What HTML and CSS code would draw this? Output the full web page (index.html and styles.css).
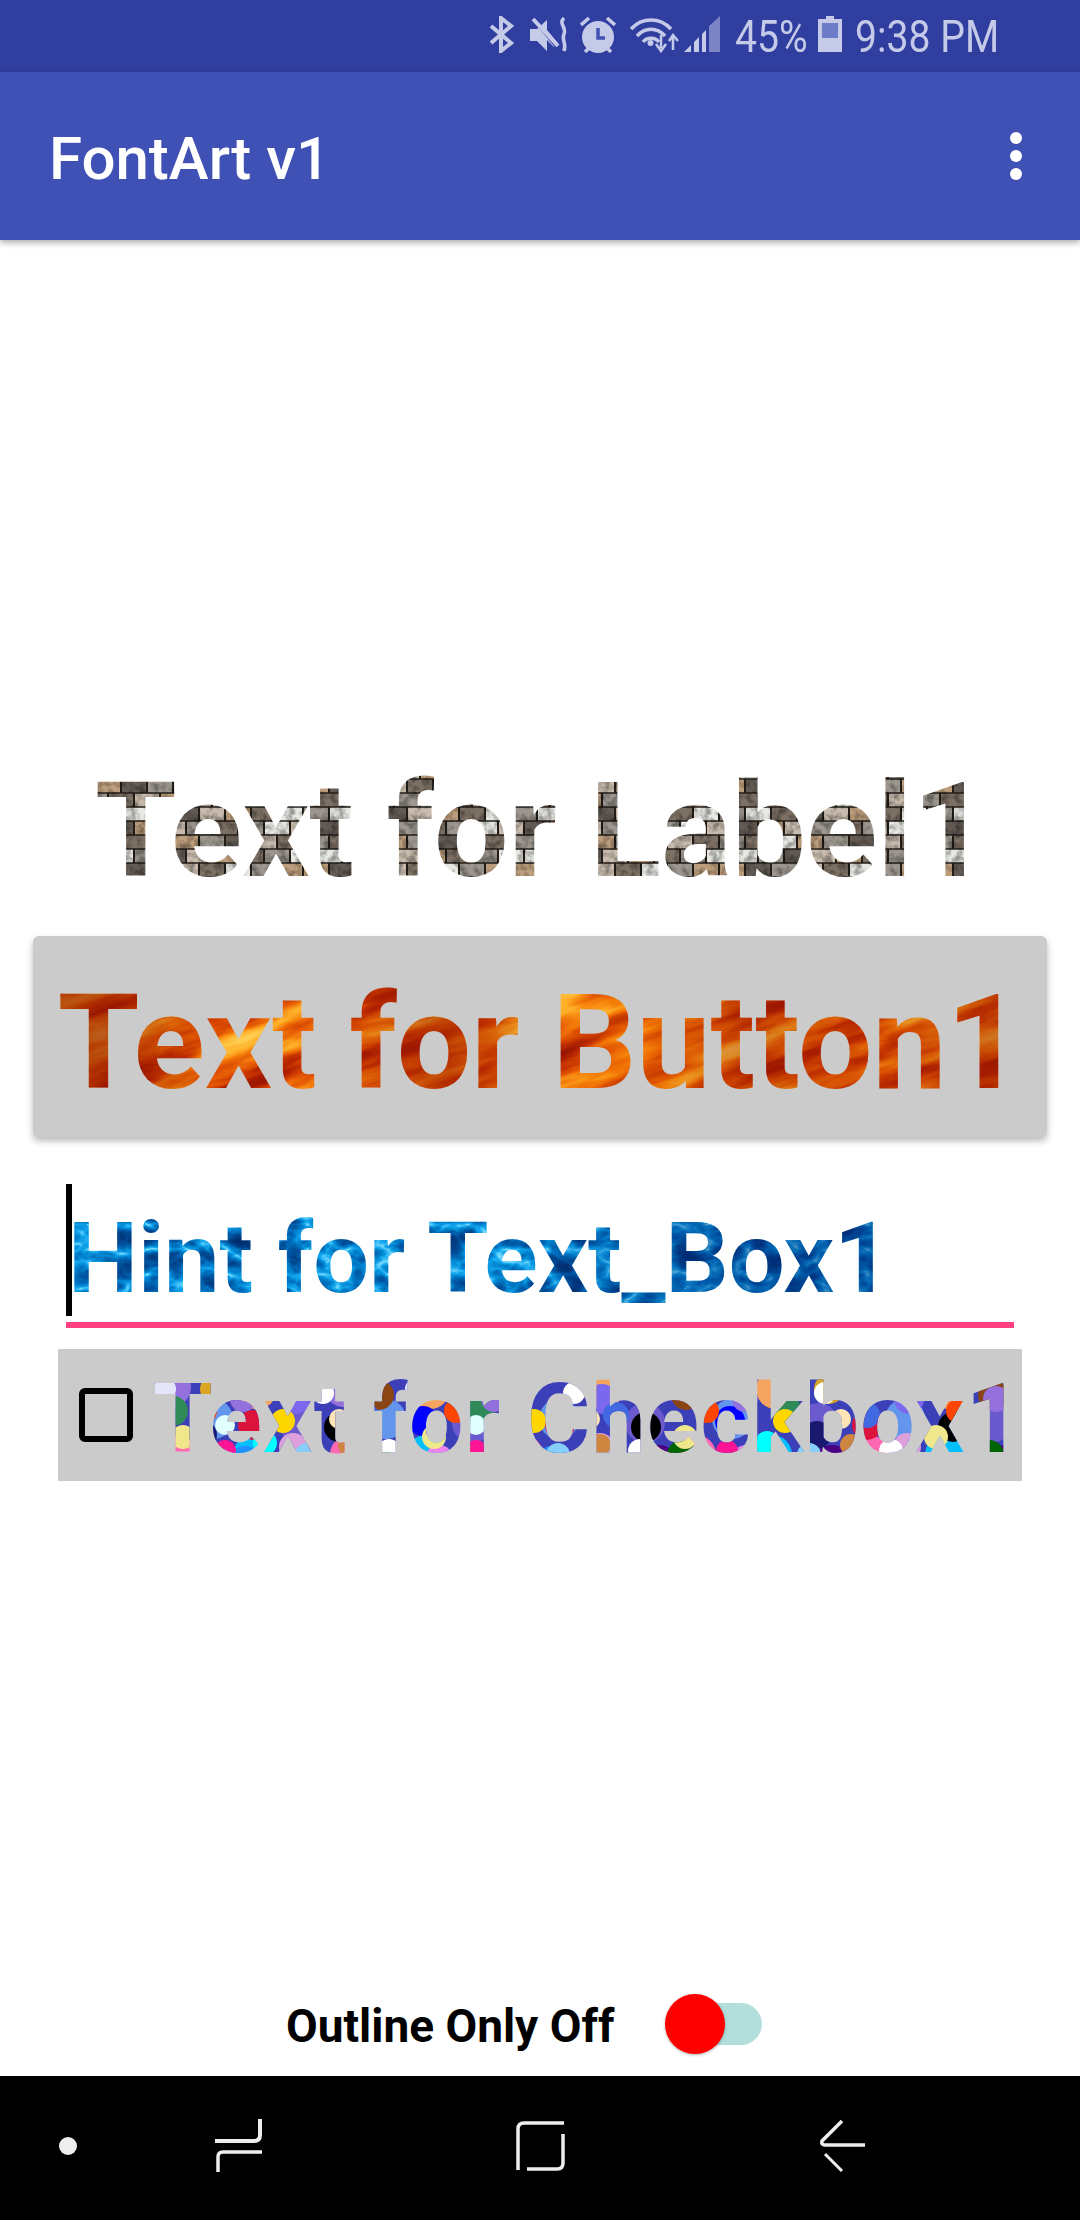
FILE: index.html
```html
<!DOCTYPE html>
<html lang="en">
<head>
    <meta charset="UTF-8">
    <meta name="viewport" content="width=device-width, initial-scale=1.0">
    <title>FontArt v1</title>
    <link rel="stylesheet" href="styles.css">
</head>
<body>
    <div class="screen">
        <!-- Status bar -->
        <div class="status-bar">
            <svg class="status-icon" width="25" height="37" viewBox="0 0 25 37"><path d="M2 10 22 27 12 35V2L22 10 2 27" fill="none" stroke="currentColor" stroke-width="4"/></svg>
            <svg class="status-icon gap-mute" width="38" height="37" viewBox="0 0 38 37"><path d="M0 13H7L17 4V14L28 27 24 31 17 24V35L7 25H0Z" fill="currentColor"/><path d="M2 2 27 32" stroke="#303f9f" stroke-width="2"/><path d="M3 3 28 30" stroke="currentColor" stroke-width="4"/><path d="M34 2C28 8 37 11 34 18 31 24 37 27 34 35" fill="none" stroke="currentColor" stroke-width="3.5"/></svg>
            <svg class="status-icon gap-alarm" width="36" height="37" viewBox="0 0 36 37"><circle cx="18" cy="21" r="16" fill="currentColor"/><path d="M1 9 9 2M35 9 27 2M5 36 9 32M31 36 27 32" stroke="currentColor" stroke-width="3.5"/><path d="M18 12V22H25" fill="none" stroke="#3f51b5" stroke-width="3.5"/></svg>
            <svg class="status-icon gap-wifi" width="50" height="37" viewBox="0 0 50 37"><path d="M1 13C12 1 30 1 41 13M7 20C15 11 27 11 35 20M13 26C17 21 25 21 29 26" fill="none" stroke="currentColor" stroke-width="3.5"/><circle cx="20.500" cy="27" r="3" fill="currentColor"/><path d="M31 19V32M26 28 31 35 36 28M43 34V21M39 25 43 19 48 25" fill="none" stroke="currentColor" stroke-width="2.500"/></svg>
            <svg class="status-icon gap-signal" width="36" height="37" viewBox="0 0 36 37"><path d="M25 10 36 0V36H25Z" fill="currentColor" opacity=".5"/><path d="M0 36 7 29V36ZM10 26 15 21V36H10ZM18 18 22 14V36H18Z" fill="currentColor"/></svg>
            <span class="status-text pct">45%</span>
            <svg class="status-icon gap-battery" width="24" height="37" viewBox="0 0 24 37"><path d="M8 0H16V3H24V36H0V3H8Z" fill="currentColor"/><rect x="4" y="7" width="16" height="15" fill="#3f51b5" opacity=".65"/></svg>
            <span class="status-text clock">9:38 PM</span>
        </div>

        <!-- App bar -->
        <header class="app-bar">
            <h1 class="app-title">FontArt v1</h1>
            <div class="overflow-menu"><span></span><span></span><span></span></div>
        </header>

        <main class="content">
            <div class="label-text art art-brick">Text for Label1</div>

            <button class="art-button"><span class="art art-fire">Text for Button1</span></button>

            <div class="text-box">
                <span class="caret"></span>
                <span class="hint art art-water">Hint for Text_Box1</span>
            </div>

            <div class="check-row">
                <span class="check-box"></span>
                <span class="check-text art art-bokeh">Text for Checkbox1</span>
            </div>

            <div class="outline-row">
                <span class="outline-label">Outline Only Off</span>
                <span class="switch"><span class="switch-thumb"></span></span>
            </div>
        </main>

        <!-- Navigation bar -->
        <nav class="nav-bar">
            <span class="nav-dot"></span>
            <svg width="48" height="54" viewBox="0 0 48 54"><path d="M45 0V16Q45 22 39 22H0" fill="none" stroke="#eee" stroke-width="4"/><path d="M47 33H8Q3 33 3 38V53" fill="none" stroke="#eee" stroke-width="3.500"/></svg>
            <svg width="50" height="50" viewBox="0 0 50 50"><path d="M48 2H8Q2 2 2 8V49" fill="none" stroke="#eee" stroke-width="3.500"/><path d="M47 13V42Q47 48 41 48H11" fill="none" stroke="#eee" stroke-width="3.500"/></svg>
            <svg width="48" height="52" viewBox="0 0 48 52"><path d="M23 1 3 21Q2 25 6 25H46" fill="none" stroke="#eee" stroke-width="3.500"/><path d="M6 34 23 51" fill="none" stroke="#eee" stroke-width="3"/></svg>
        </nav>
    </div>
</body>
</html>
```

FILE: styles.css
```css
/* Global Styles */
body {
    margin: 0;
    background: #fff;
    font-family: Roboto, Arial, sans-serif;
}

.screen {
    width: 1080px;
    height: 2220px;
    display: flex;
    flex-direction: column;
    overflow: hidden;
}

/* Status Bar */
.status-bar {
    height: 72px;
    flex: none;
    background: #303f9f;
    color: #c5cae9;
    display: flex;
    align-items: flex-start;
    padding: 16px 80px 0 489px;
    box-sizing: border-box;
}

.status-icon {
    flex: none;
}

.gap-mute { margin-left: 16px; }
.gap-alarm { margin-left: 12px; }
.gap-wifi { margin-left: 14px; }
.gap-signal { margin-left: 4px; }
.gap-battery { margin-left: 13px; }

.status-text {
    font-size: 44px;
    line-height: 42px;
    white-space: nowrap;
    transform-origin: left center;
    transform: scaleX(0.89);
}

.pct {
    width: 70px;
    margin-left: 15px;
}

.clock {
    width: 145px;
    margin-left: 13px;
}

/* App Bar */
.app-bar {
    height: 168px;
    flex: none;
    box-sizing: border-box;
    background: #3f51b5;
    box-shadow: 0 3px 6px rgba(0, 0, 0, 0.3);
    display: flex;
    align-items: center;
    justify-content: space-between;
    padding: 0 58px 0 49px;
    position: relative;
}

.app-title {
    margin: 4px 0 0;
    color: #fff;
    font-size: 60px;
    font-weight: 500;
}

.overflow-menu {
    display: flex;
    flex-direction: column;
    gap: 6px;
}

.overflow-menu span {
    width: 12px;
    height: 12px;
    border-radius: 50%;
    background: #fff;
}

/* Textured text */
.art {
    font-weight: 700;
    white-space: nowrap;
    color: transparent;
    -webkit-background-clip: text;
    background-clip: text;
}

.art-brick {
    background-image: url("data:image/svg+xml,<svg xmlns='http://www.w3.org/2000/svg' width='208' height='84'><defs><filter id='g' x='0' y='0' width='100%' height='100%'><feTurbulence type='fractalNoise' baseFrequency='.14' numOctaves='3' seed='3'/><feColorMatrix values='0 0 0 0 0 0 0 0 0 0 0 0 0 0 0 2.6 0 0 0 -1'/></filter></defs><rect width='208' height='84' fill='%23231d18'/><g fill='none' stroke-width='12.500'><path stroke='%239c968f' d='M1 7h24M105 7h24M40 21h24M170 21h24M53 35h24M157 35h24M92 49h24M196 49h24M-12 49h24M1 63h24M92 77h24M144 77h24'/><path stroke='%23c9bcae' d='M157 7h24M92 21h24M79 35h24M40 49h24M170 49h24M105 63h24M66 77h24M196 77h24M-12 77h24'/><path stroke='%237d7064' d='M27 7h24M183 7h24M144 21h24M105 35h24M14 49h24M53 63h24M157 63h24M118 77h24'/><path stroke='%23e8e8e4' d='M53 7h24M14 21h24M196 21h24M-12 21h24M131 35h24M118 49h24M27 63h24M183 63h24M170 77h24'/><path stroke='%23bd9e7c' d='M79 7h24M118 21h24M1 35h24M183 35h24M66 49h24M131 63h24M40 77h24'/><path stroke='%23625a53' d='M131 7h24M66 21h24M27 35h24M144 49h24M79 63h24M14 77h24'/></g><rect width='208' height='84' filter='url(%23g)' opacity='.35'/></svg>");
}

.art-fire {
    background-image:
        linear-gradient(90deg, rgba(140, 20, 0, 0.6) 6%, rgba(140, 20, 0, 0) 16%, rgba(140, 20, 0, 0) 28%, rgba(150, 25, 0, 0.55) 40%, rgba(150, 25, 0, 0) 52%, rgba(250, 130, 0, 0.3) 60%, rgba(150, 25, 0, 0.4) 72%, rgba(160, 40, 0, 0.15) 85%, rgba(150, 25, 0, 0.55) 100%),
        url("data:image/svg+xml,<svg xmlns='http://www.w3.org/2000/svg' width='1080' height='200'><filter id='f' x='0' y='0' width='100%' height='100%' color-interpolation-filters='sRGB'><feTurbulence type='fractalNoise' baseFrequency='.007 .035' numOctaves='5' seed='11'/><feColorMatrix values='1 0 0 0 0 1 0 0 0 0 1 0 0 0 0 0 0 0 0 1'/><feComponentTransfer><feFuncR type='table' tableValues='.55 .55 .6 .68 .8 .9 .96 1 1 1 1'/><feFuncG type='table' tableValues='.06 .06 .08 .12 .22 .36 .5 .68 .8 .8 .8'/><feFuncB type='table' tableValues='0 0 0 0 0 .02 .05 .15 .3 .4 .4'/></feComponentTransfer></filter><g transform='rotate(-18 540 100)'><rect x='-100' y='-400' width='1280' height='1000' filter='url(%23f)'/></g></svg>");
}

.art-water {
    background-image:
        linear-gradient(90deg, rgba(0, 30, 110, 0) 55%, rgba(0, 30, 110, 0.4) 80%),
        url("data:image/svg+xml,<svg xmlns='http://www.w3.org/2000/svg' width='1080' height='200'><filter id='w' x='0' y='0' width='100%' height='100%' color-interpolation-filters='sRGB'><feTurbulence type='turbulence' baseFrequency='.025 .04' numOctaves='3' seed='5'/><feColorMatrix values='1 0 0 0 0 1 0 0 0 0 1 0 0 0 0 0 0 0 0 1'/><feComponentTransfer><feFuncR type='table' tableValues='.55 .08 0 0 0 0 0 0'/><feFuncG type='table' tableValues='.9 .66 .5 .36 .26 .2 .16 .16'/><feFuncB type='table' tableValues='1 .94 .8 .66 .54 .46 .42 .42'/></feComponentTransfer></filter><rect width='1080' height='200' filter='url(%23w)'/></svg>");
}

.art-bokeh {
    background-color: #3b3fb8;
    background-image:
        url("data:image/svg+xml,<svg xmlns='http://www.w3.org/2000/svg' width='251' height='120'><circle cx='12' cy='30' r='11' fill='lavender'/><circle cx='52' cy='52' r='12' fill='orangered'/><circle cx='90' cy='40' r='13' fill='mediumpurple'/><circle cx='130' cy='62' r='12' fill='gold'/><circle cx='170' cy='34' r='11' fill='white'/><circle cx='212' cy='56' r='13' fill='royalblue'/><circle cx='30' cy='78' r='12' fill='khaki'/><circle cx='72' cy='92' r='11' fill='deeppink'/><circle cx='112' cy='84' r='12' fill='cyan'/><circle cx='154' cy='96' r='12' fill='lightskyblue'/><circle cx='196' cy='86' r='11' fill='peru'/><circle cx='236' cy='92' r='12' fill='white'/><circle cx='72' cy='66' r='10' fill='lightcyan'/><circle cx='186' cy='60' r='10' fill='moccasin'/></svg>"),
        url("data:image/svg+xml,<svg xmlns='http://www.w3.org/2000/svg' width='307' height='120'><circle cx='20' cy='52' r='15' fill='seagreen'/><circle cx='62' cy='30' r='15' fill='goldenrod'/><circle cx='100' cy='66' r='15' fill='crimson'/><circle cx='142' cy='40' r='15' fill='mediumslateblue'/><circle cx='186' cy='68' r='15' fill='black'/><circle cx='226' cy='36' r='15' fill='saddlebrown'/><circle cx='270' cy='62' r='15' fill='blue'/><circle cx='8' cy='100' r='14' fill='darkorange'/><circle cx='50' cy='76' r='14' fill='midnightblue'/><circle cx='92' cy='102' r='15' fill='dodgerblue'/><circle cx='140' cy='88' r='14' fill='plum'/><circle cx='222' cy='96' r='15' fill='darkgreen'/><circle cx='286' cy='100' r='14' fill='violet'/></svg>"),
        url("data:image/svg+xml,<svg xmlns='http://www.w3.org/2000/svg' width='173' height='120'><circle cx='18' cy='28' r='20' fill='mediumpurple'/><circle cx='60' cy='60' r='20' fill='cornflowerblue'/><circle cx='104' cy='30' r='20' fill='sandybrown'/><circle cx='146' cy='64' r='20' fill='slateblue'/><circle cx='24' cy='96' r='20' fill='hotpink'/><circle cx='100' cy='96' r='20' fill='deepskyblue'/><circle cx='160' cy='104' r='18' fill='indigo'/></svg>");
}

/* Label */
.content {
    flex: 1;
    display: flex;
    flex-direction: column;
    min-height: 0;
}

.label-text {
    margin: 511px 0 0 95px;
    align-self: flex-start;
    font-size: 132px;
    line-height: 160px;
}

/* Button */
.art-button {
    margin: 25px 33px 0;
    height: 201px;
    flex: none;
    border: none;
    border-radius: 6px;
    background: #cbcbcb;
    box-shadow: 0 4px 7px rgba(0, 0, 0, 0.28);
    padding: 12px 0 0;
    font-family: inherit;
    font-size: 132px;
    line-height: 160px;
    text-align: center;
}

/* Text box */
.text-box {
    margin: 47px 66px 0;
    display: flex;
    align-items: flex-start;
    border-bottom: 6px solid #ff4081;
    padding-bottom: 6px;
}

.caret {
    width: 6px;
    height: 132px;
    flex: none;
    background: #000;
}

.hint {
    font-size: 99px;
    line-height: 116px;
    margin: 16px 0 0 -4px;
}

/* Checkbox */
.check-row {
    margin: 21px 58px 0;
    height: 132px;
    flex: none;
    box-sizing: border-box;
    background: #cbcbcb;
    display: flex;
    align-items: center;
    padding: 0 17px 0 21px;
}

.check-box {
    width: 42px;
    height: 42px;
    flex: none;
    border: 6px solid #000;
    border-radius: 6px;
    margin-right: 20px;
}

.check-text {
    font-size: 96px;
    line-height: 120px;
    margin-top: 8px;
    letter-spacing: 1.6px;
}

/* Outline toggle */
.outline-row {
    margin-top: auto;
    height: 86px;
    flex: none;
    display: flex;
    align-items: center;
    padding-left: 286px;
    margin-bottom: 9px;
}

.outline-label {
    font-size: 46px;
    font-weight: 700;
    white-space: nowrap;
    padding-top: 4px;
}

.switch {
    margin-left: 51px;
    width: 97px;
    height: 42px;
    border-radius: 21px;
    background: #b2dfdb;
    display: flex;
    align-items: center;
}

.switch-thumb {
    width: 60px;
    height: 60px;
    border-radius: 50%;
    background: #f00;
    box-shadow: 0 1px 3px rgba(0, 0, 0, 0.3);
}

/* Navigation Bar */
.nav-bar {
    height: 144px;
    flex: none;
    box-sizing: border-box;
    background: #000;
    display: flex;
    align-items: center;
    gap: 253px;
    padding: 0 0 5px 59px;
}

.nav-dot {
    width: 18px;
    height: 18px;
    border-radius: 50%;
    background: #eee;
    margin-right: -115px;
}
```
